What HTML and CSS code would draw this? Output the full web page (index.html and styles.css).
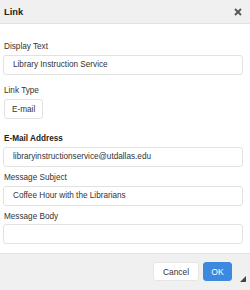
FILE: index.html
```html
<!DOCTYPE html>
<html lang="en">
<head>
    <meta charset="UTF-8">
    <title>Link</title>
    <link rel="stylesheet" href="styles.css">
</head>
<body>

<div class="dialog">
    <div class="dialog-head">
        <span class="dialog-title">Link</span>
        <span class="close">
            <svg width="8" height="8" viewBox="0 0 8 8"><path d="M1 1L7 7M7 1L1 7" stroke="#555" stroke-width="1.8"/></svg>
        </span>
    </div>

    <div class="dialog-body">
        <div class="field">
            <label>Display Text</label>
            <div class="input">Library Instruction Service</div>
        </div>
        <div class="field type-field">
            <label>Link Type</label>
            <div class="select">E-mail</div>
        </div>
        <div class="field email-field">
            <label class="bold">E-Mail Address</label>
            <div class="input">libraryinstructionservice@utdallas.edu</div>
        </div>
        <div class="field">
            <label>Message Subject</label>
            <div class="input">Coffee Hour with the Librarians</div>
        </div>
        <div class="field last-field">
            <label>Message Body</label>
            <div class="input"></div>
        </div>
    </div>

    <div class="dialog-foot">
        <button class="btn">Cancel</button>
        <button class="btn btn-ok">OK</button>
        <span class="resize"></span>
    </div>
</div>

</body>
</html>
```

FILE: styles.css
```css
/* General styling */
body {
    margin: 0;
    padding: 0;
    font-family: "Liberation Sans", Arial, sans-serif;
    font-size: 8.2px;
    color: #333;
    background-color: #fff;
}

.dialog {
    width: 250px;
    height: 290px;
    display: flex;
    flex-direction: column;
}

/* Header */
.dialog-head {
    height: 23px;
    background-color: #f0f0f0;
    border-bottom: 1px solid #e2e2e2;
    display: flex;
    align-items: center;
    justify-content: space-between;
    padding: 0 8px 0 4px;
}

.dialog-title {
    font-size: 9.3px;
    font-weight: bold;
    color: #222;
}

.close svg {
    display: block;
}

/* Form */
.dialog-body {
    flex: 1;
    padding: 18px 7px 0 3px;
}

.field label {
    display: block;
    line-height: 10px;
    padding-left: 1px;
    margin-bottom: 3px;
}

.field label.bold {
    font-weight: bold;
    color: #222;
}

.field {
    margin-bottom: 6px;
}

.field:first-child {
    margin-bottom: 11px;
}

.type-field {
    margin-bottom: 15px;
}

.last-field label {
    margin-bottom: 2px;
}

.input {
    height: 18px;
    line-height: 18px;
    border: 1px solid #e2e2e2;
    border-radius: 3px;
    padding-left: 9px;
    white-space: nowrap;
    overflow: hidden;
}

.select {
    display: inline-block;
    width: 30px;
    height: 13px;
    margin-left: 1px;
    padding: 5px 0 0 7px;
    line-height: 10px;
    border: 1px solid #e2e2e2;
    border-radius: 3px;
}

/* Footer */
.dialog-foot {
    height: 37px;
    box-sizing: border-box;
    background-color: #f0f0f0;
    border-top: 1px solid #e2e2e2;
    display: flex;
    justify-content: flex-end;
    align-items: flex-start;
    gap: 4px;
    padding: 8px 4px 0 0;
}

.btn {
    height: 19px;
    padding: 0 9px;
    font-family: "Liberation Sans", Arial, sans-serif;
    font-size: 8.4px;
    color: #333;
    background-color: #fff;
    border: 1px solid #e6e6e6;
    border-radius: 3px;
}

.btn-ok {
    width: 29px;
    padding: 0;
    color: #fff;
    background-color: #3b8ae0;
    border-color: #3b8ae0;
    font-size: 8.6px;
}

.resize {
    width: 0;
    height: 0;
    margin: 14px 0 0 4px;
    border-left: 6px solid transparent;
    border-bottom: 6px solid #444;
}
```
